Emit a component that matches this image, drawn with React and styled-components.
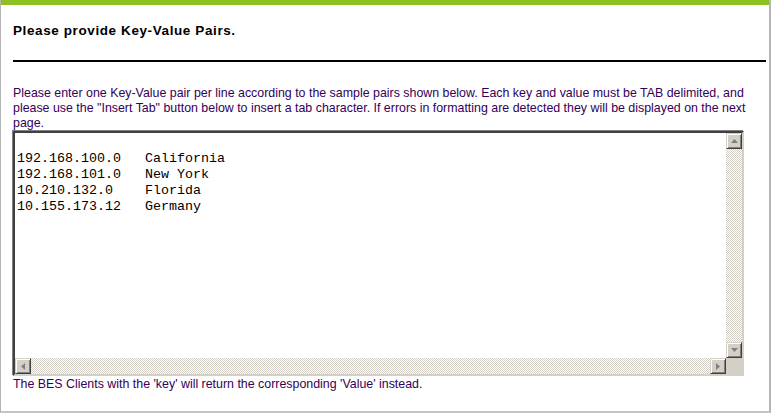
import React from "react";
import styled, { createGlobalStyle } from "styled-components";

const Global = createGlobalStyle`
  html, body { margin: 0; padding: 0; background: #fff; }
  body { font-family: "Liberation Sans", Arial, sans-serif; }
`;

const Frame = styled.div`
  width: 771px;
  height: 413px;
  box-sizing: border-box;
  border-left: 1px solid #b4b4b4;
  border-right: 2px solid #b4b4b4;
  border-bottom: 2px solid #c4c4c4;
  display: flex;
  flex-direction: column;
`;

const TopBar = styled.div`
  height: 5px;
  background: #8cc11f;
  flex: none;
`;

const Body = styled.div`
  padding: 18px 0 0 12px;
  display: flex;
  flex-direction: column;
`;

const Title = styled.h1`
  margin: 0;
  font-size: 13.5px;
  letter-spacing: 0.6px;
  line-height: 16px;
  font-weight: bold;
  color: #000;
`;

const Rule = styled.hr`
  margin: 21px 0 0 0;
  width: 753px;
  border: none;
  border-top: 2px solid #000;
  height: 0;
`;

const Text = styled.p`
  margin: ${(p) => p.$top || 0}px 0 0 0;
  width: 755px;
  font-size: 12.4px;
  line-height: 15px;
  color: #35005a;
`;

const Box = styled.div`
  width: 731px;
  height: 245px;
  box-sizing: border-box;
  border-style: solid;
  border-width: 2px;
  border-color: #404040 #d4d0c8 #d4d0c8 #404040;
  box-shadow: -1px -1px 0 #808080;
  display: grid;
  grid-template-columns: 1fr 16px;
  grid-template-rows: 1fr 16px;
  background: #fff;
`;

const Content = styled.textarea`
  border: none;
  outline: none;
  resize: none;
  overflow: hidden;
  margin: 0;
  padding: 2px 2px 0 2px;
  font-family: "Liberation Mono", "Courier New", monospace;
  font-size: 13.333px;
  line-height: 16px;
  color: #000;
  tab-size: 8;
  background: #fff;
  white-space: pre;
`;

const Track = styled.div`
  display: flex;
  flex-direction: ${(p) => (p.$vertical ? "column" : "row")};
  background-color: #fff;
  background-image: repeating-conic-gradient(#d4d0c8 0 25%, #fff 0 50%);
  background-size: 2px 2px;
`;

const Fill = styled.div`
  flex: 1;
`;

const Btn = styled.div`
  width: 16px;
  height: 16px;
  box-sizing: border-box;
  flex: none;
  background: #d4d0c8;
  border-style: solid;
  border-width: 1px;
  border-color: #d4d0c8 #404040 #404040 #d4d0c8;
  box-shadow: inset 1px 1px 0 #fff, inset -1px -1px 0 #808080;
  display: flex;
  align-items: center;
  justify-content: center;
`;

const Corner = styled.div`
  background: #d4d0c8;
`;

const arrows = {
  up: "M0 4 L3.5 0 L7 4 Z",
  down: "M0 0 L7 0 L3.5 4 Z",
  left: "M4 0 L4 7 L0 3.5 Z",
  right: "M0 0 L4 3.5 L0 7 Z",
};

function ScrollButton({ dir }) {
  const vertical = dir === "up" || dir === "down";
  return (
    <Btn>
      <svg
        width={vertical ? 7 : 4}
        height={vertical ? 4 : 7}
        viewBox={vertical ? "0 0 7 4" : "0 0 4 7"}
      >
        <path d={arrows[dir]} fill="#808080" />
      </svg>
    </Btn>
  );
}

const sample =
  "\n192.168.100.0\tCalifornia\n192.168.101.0\tNew York\n10.210.132.0\tFlorida\n10.155.173.12\tGermany";

export default function App() {
  return (
    <>
      <Global />
      <Frame>
        <TopBar />
        <Body>
          <Title>Please provide Key-Value Pairs.</Title>
          <Rule />
          <Text $top={24}>
            Please enter one Key-Value pair per line according to the sample pairs shown below. Each key and
            value must be TAB delimited, and please use the "Insert Tab" button below to insert a tab character. If
            errors in formatting are detected they will be displayed on the next page.
          </Text>
          <Box>
            <Content readOnly value={sample} spellCheck={false} />
            <Track $vertical>
              <ScrollButton dir="up" />
              <Fill />
              <ScrollButton dir="down" />
            </Track>
            <Track>
              <ScrollButton dir="left" />
              <Fill />
              <ScrollButton dir="right" />
            </Track>
            <Corner />
          </Box>
          <Text $top={1}>The BES Clients with the 'key' will return the corresponding 'Value' instead.</Text>
        </Body>
      </Frame>
    </>
  );
}
